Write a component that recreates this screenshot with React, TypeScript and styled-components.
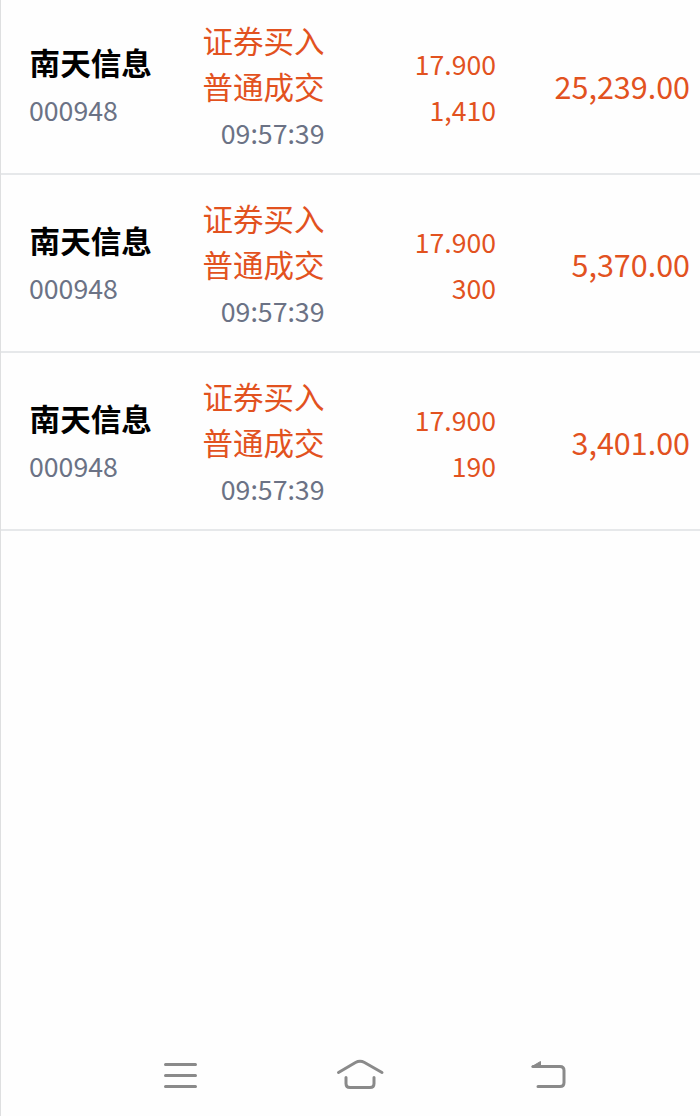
import React from 'react';
import styled, { createGlobalStyle } from 'styled-components';

const Global = createGlobalStyle`
  * { box-sizing: border-box; }
  body { margin: 0; background: #fff; }
`;
const Screen = styled.main`
  width: 700px; height: 1116px; overflow: hidden;
  display: flex; flex-direction: column;
  border-left: 1px solid #dedfe0; background: #fefefe;
  font-family: "Noto Sans CJK SC", sans-serif;
`;
const List = styled.section`flex: 1;`;
const Row = styled.article<{ $first?: boolean }>`
  height: ${p => (p.$first ? 175 : 178)}px;
  padding: ${p => (p.$first ? 17 : 20)}px 10px 0 28px;
  border-bottom: 2px solid #e6e8ea;
  display: grid; grid-template-columns: 130px 165.5px 171.5px 1fr;
`;
const Column = styled.div<{ $top: number; $right?: boolean }>`
  display: flex; flex-direction: column; padding-top: ${p => p.$top}px;
  align-items: ${p => (p.$right ? 'flex-end' : 'flex-start')};
`;
const Line = styled.span<{ $size: number; $color: string; $height?: number }>`
  height: ${p => p.$height ?? 46}px; line-height: 46px; white-space: nowrap;
  font-size: ${p => p.$size}px; color: ${p => p.$color};
  font-weight: 400;
`;
const StockName = styled(Line)`
  font-weight: 700;
  padding-left: 0.6px;
`;
const NavBar = styled.nav`
  height: 82px; padding: 21px 0 0 159px;
  display: grid; grid-template-columns: 175px 193px 50px;
`;
const NavIcon = styled.svg`
  width: 50px; height: 40px; fill: none; stroke: #8a8a8a; stroke-width: 3;
  stroke-linecap: round; stroke-linejoin: round;
`;
const red = '#e2521f';
const gray = '#6b7285';
const trades = [
  { qty: '1,410', amount: '25,239.00' },
  { qty: '300', amount: '5,370.00' },
  { qty: '190', amount: '3,401.00' },
];

export default function App() {
  return (
    <Screen>
      <Global />
      <List>
        {trades.map((t, i) => (
          <Row key={t.qty} $first={i === 0}>
            <Column $top={22}>
              <StockName $size={30.6} $color="#000" $height={48}>南天信息</StockName>
              <Line $size={26.7} $color={gray}>000948</Line>
            </Column>
            <Column $top={0} $right>
              <Line $size={30.5} $color={red}>证券买入</Line>
              <Line $size={30.5} $color={red} $height={47}>普通成交</Line>
              <Line $size={26.7} $color={gray}>09:57:39</Line>
            </Column>
            <Column $top={24} $right>
              <Line $size={26.6} $color={red}>17.900</Line>
              <Line $size={26.6} $color={red}>{t.qty}</Line>
            </Column>
            <Column $top={46} $right>
              <Line $size={30.5} $color={red}>{t.amount}</Line>
            </Column>
          </Row>
        ))}
      </List>
      <NavBar>
        <NavIcon viewBox="0 0 50 40"><path d="M5.5 9.5H35.5M5.5 20.5H35.5M5.5 31.5H35.5" /></NavIcon>
        <NavIcon viewBox="0 0 50 40"><path d="M3.5 17.5L20.5 7.5Q25 5 29.5 7.5L47 17.5M11 22.5V28.5Q11 32.5 15 32.5H35Q39 32.5 39 28.5V22.5" /></NavIcon>
        <NavIcon viewBox="0 0 50 40">
          <path d="M5 11.5H32Q36 11.5 36 15.5V27.5Q36 31.5 32 31.5H10" />
          <path d="M4 11.5L12.5 6.5V11.5Z" fill="#8a8a8a" strokeWidth="1" />
        </NavIcon>
      </NavBar>
    </Screen>
  );
}
